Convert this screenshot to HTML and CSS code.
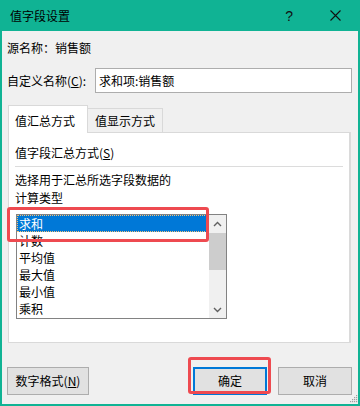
FILE: index.html
```html
<!DOCTYPE html>
<html lang="zh-CN">
<head>
<meta charset="utf-8">
<title>值字段设置</title>
<link rel="stylesheet" href="styles.css">
</head>
<body>
<div class="window">
  <div class="titlebar">
    <span class="title">值字段设置</span>
    <span class="help">?</span>
    <span class="close"><svg width="11" height="11" viewBox="0 0 11 11"><path d="M0.5 0.5L10.5 10.5M10.5 0.5L0.5 10.5" stroke="#111" stroke-width="1.1" fill="none"/></svg></span>
  </div>
  <div class="content">
    <div class="source">源名称：销售额</div>
    <div class="namerow">
      <span class="label">自定义名称(<u>C</u>):</span>
      <div class="input">求和项:销售额</div>
    </div>
    <div class="tabs">
      <div class="tab active">值汇总方式</div>
      <div class="tab second">值显示方式</div>
    </div>
    <div class="panel">
      <div class="group-title">值字段汇总方式(<u>S</u>)</div>
      <div class="sep"></div>
      <div class="desc">选择用于汇总所选字段数据的<br>计算类型</div>
      <div class="listbox">
        <ul class="items">
          <li class="selected">求和</li>
          <li>计数</li>
          <li>平均值</li>
          <li>最大值</li>
          <li>最小值</li>
          <li>乘积</li>
        </ul>
        <div class="scrollbar">
          <div class="sb-btn"><svg width="9" height="6" viewBox="0 0 9 6"><path d="M1 5L4.5 1.5L8 5" stroke="#606060" stroke-width="1.4" fill="none"/></svg></div>
          <div class="sb-thumb"></div>
          <div class="sb-track"></div>
          <div class="sb-btn"><svg width="9" height="6" viewBox="0 0 9 6"><path d="M1 1L4.5 4.5L8 1" stroke="#606060" stroke-width="1.4" fill="none"/></svg></div>
        </div>
      </div>
    </div>
    <div class="buttons">
      <div class="btn btn-format">数字格式(<u>N</u>)</div>
      <div class="spacer"></div>
      <div class="btn btn-ok">确定</div>
      <div class="btn btn-cancel">取消</div>
    </div>
  </div>
  <div class="mark mark-list"></div>
  <div class="mark mark-ok"></div>
  <svg class="grip" width="8" height="8" viewBox="0 0 8 8">
    <rect x="6" y="0" width="1.2" height="1.2" fill="#a0a0a0"/>
    <rect x="4" y="2" width="1.2" height="1.2" fill="#a0a0a0"/>
    <rect x="6" y="2" width="1.2" height="1.2" fill="#a0a0a0"/>
    <rect x="2" y="4" width="1.2" height="1.2" fill="#a0a0a0"/>
    <rect x="4" y="4" width="1.2" height="1.2" fill="#a0a0a0"/>
    <rect x="6" y="4" width="1.2" height="1.2" fill="#a0a0a0"/>
    <rect x="0" y="6" width="1.2" height="1.2" fill="#a0a0a0"/>
    <rect x="2" y="6" width="1.2" height="1.2" fill="#a0a0a0"/>
    <rect x="4" y="6" width="1.2" height="1.2" fill="#a0a0a0"/>
    <rect x="6" y="6" width="1.2" height="1.2" fill="#a0a0a0"/>
  </svg>
</div>
</body>
</html>
```
FILE: styles.css
```css
* { box-sizing: border-box; }
html, body { margin: 0; padding: 0; }
body {
  width: 360px;
  height: 406px;
  overflow: hidden;
  font-family: "Noto Sans CJK SC", "Microsoft YaHei", sans-serif;
  font-size: 12px;
  color: #000;
  background: #f0f0f0;
}
u { text-decoration: underline; text-underline-offset: 1px; }

.window {
  position: relative;
  width: 360px;
  height: 406px;
  background: #f0f0f0;
  border: 2px solid #10b394;
  border-top: 0;
}

.titlebar {
  height: 31px;
  margin: 0 -2px;
  background: #10b394;
  display: flex;
  align-items: center;
  padding-left: 10px;
}
.title { line-height: 16px; }
.help {
  margin-left: auto;
  font-family: "Liberation Sans", sans-serif;
  font-size: 14px;
  line-height: 16px;
  color: #111;
  margin-right: 37px;
}
.close { display: flex; margin-right: 19px; }

.content {
  padding-left: 5px;
  display: flex;
  flex-direction: column;
}

.source {
  margin-top: 9px;
  line-height: 16px;
  height: 16px;
}

.namerow {
  margin-top: 12px;
  height: 25px;
  display: flex;
  align-items: center;
}
.label { width: 88px; line-height: 16px; }
.input {
  width: 257px;
  height: 25px;
  border: 1px solid #adadad;
  background: #fff;
  padding-left: 3px;
  line-height: 23px;
}

.tabs {
  margin-top: 12px;
  margin-left: 1px;
  height: 27px;
  display: flex;
  align-items: flex-end;
}
.tab {
  height: 24px;
  width: 75px;
  border: 1px solid #d9d9d9;
  border-bottom: 0;
  padding-left: 6px;
  padding-top: 4px;
  line-height: 16px;
  background: #f0f0f0;
}
.tab.second { border-left: 0; padding-left: 7px; }
.tab.active {
  position: relative;
  z-index: 1;
  width: 80px;
  height: 28px;
  margin-bottom: -1px;
  background: #fff;
  padding-top: 7px;
}

.panel {
  margin-left: 1px;
  width: 343px;
  height: 211px;
  border: 1px solid #d9d9d9;
  border-right: 2px solid #dadada;
  background: #fff;
  padding-left: 6px;
  display: flex;
  flex-direction: column;
}
.group-title { margin-top: 12px; line-height: 16px; height: 16px; }
.sep { margin-top: 5px; width: 328px; height: 1px; background: #dcdcdc; }
.desc { margin-top: 4px; line-height: 18px; }

.listbox {
  margin-top: 7px;
  margin-left: 1px;
  width: 211px;
  height: 105px;
  border: 1px solid #828282;
  display: flex;
  background: #fff;
}
.items {
  list-style: none;
  margin: 0;
  padding: 0;
  width: 192px;
}
.items li {
  height: 17px;
  line-height: 17px;
  padding-left: 2px;
}
.items li.selected {
  background: #0078d7;
  color: #fff;
  outline: 1px dotted #f3c27a;
  outline-offset: -1px;
}
.scrollbar {
  width: 17px;
  background: #f0f0f0;
  display: flex;
  flex-direction: column;
}
.sb-btn {
  height: 17px;
  display: flex;
  align-items: center;
  justify-content: center;
}
.sb-thumb { height: 37px; margin-top: 1px; background: #cdcdcd; }
.sb-track { flex: 1; }

.buttons {
  margin-top: 24px;
  height: 28px;
  display: flex;
  width: 345px;
}
.spacer { flex: 1; }
.btn {
  height: 28px;
  border: 1px solid #adadad;
  background: #e1e1e1;
  display: flex;
  align-items: center;
  justify-content: center;
  line-height: 16px;
}
.btn-format { width: 82px; }
.btn-ok { width: 74px; border: 2px solid #0078d7; }
.btn-cancel { width: 74px; margin-left: 11px; }

.mark {
  position: absolute;
  border: 3px solid #ee4a50;
  border-radius: 3px;
  z-index: 5;
}
.mark-list { left: 5px; top: 207px; width: 202px; height: 35px; }
.mark-ok { left: 186px; top: 357px; width: 83px; height: 37px; }

.grip { position: absolute; right: 0; bottom: 1px; }
```
